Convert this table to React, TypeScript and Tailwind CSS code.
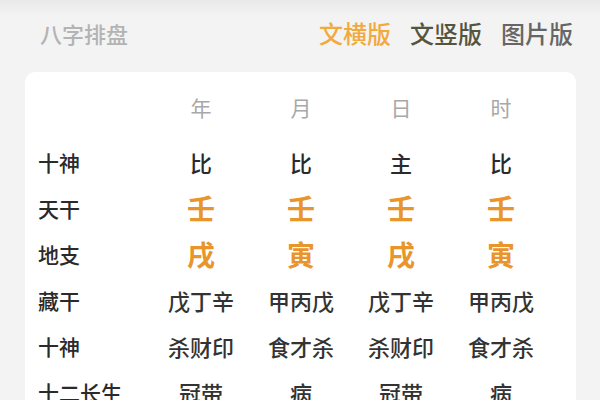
import React from "react";

const cols = ["年", "月", "日", "时"];
const rows: { label: string; values: string[]; kind: "plain" | "big" | "triple" }[] = [
  { label: "十神", values: ["比", "比", "主", "比"], kind: "plain" },
  { label: "天干", values: ["壬", "壬", "壬", "壬"], kind: "big" },
  { label: "地支", values: ["戌", "寅", "戌", "寅"], kind: "big" },
  { label: "藏干", values: ["戊丁辛", "甲丙戊", "戊丁辛", "甲丙戊"], kind: "triple" },
  { label: "十神", values: ["杀财印", "食才杀", "杀财印", "食才杀"], kind: "triple" },
  { label: "十二长生", values: ["冠带", "病", "冠带", "病"], kind: "triple" },
];

export default function App() {
  return (
    <div
      className="w-[600px] h-[400px] overflow-hidden bg-[linear-gradient(to_bottom,#e9e9e9_0px,#f3f3f3_16px,#f3f3f3_100%)]"
      style={{ fontFamily: '"Noto Sans CJK SC", "Noto Sans", sans-serif' }}
    >
      <div className="flex h-[66px] items-center pl-[40px] pr-[27px]">
        <div className="text-[22px] font-medium text-[#b3b3b3] leading-none">八字排盘</div>
        <div className="ml-auto flex gap-[19px] text-[24px] font-medium leading-none">
          <span className="text-[#f2a93e]">文横版</span>
          <span className="text-[#55553d]">文竖版</span>
          <span className="text-[#666666]">图片版</span>
        </div>
      </div>
      <div className="ml-[25px] mt-[6px] w-[551px] h-[400px] rounded-[10px] bg-white pt-[12px]">
        <div className="grid grid-cols-[126px_100px_100px_100px_100px] h-[46px] items-center">
          <div />
          {cols.map((c) => (
            <div key={c} className="text-center text-[21px] text-[#a8a8a8] leading-none">
              {c}
            </div>
          ))}
        </div>
        <div className="mt-[9px]">
          {rows.map((r, i) => (
            <div
              key={i}
              className="grid grid-cols-[126px_100px_100px_100px_100px] h-[46px] items-center"
            >
              <div className="pl-[13px] text-[21px] font-medium text-[#2a2a2a] leading-none whitespace-nowrap">
                {r.label}
              </div>
              {r.values.map((v, j) => (
                <div
                  key={j}
                  className={
                    r.kind === "big"
                      ? "text-center text-[28px] font-semibold text-[#e8952c] leading-none"
                      : r.kind === "plain"
                      ? "text-center text-[22px] font-medium text-[#2a2a2a] leading-none"
                      : "text-center text-[22px] font-medium text-[#333333] leading-none whitespace-nowrap"
                  }
                >
                  {v}
                </div>
              ))}
            </div>
          ))}
        </div>
      </div>
    </div>
  );
}
